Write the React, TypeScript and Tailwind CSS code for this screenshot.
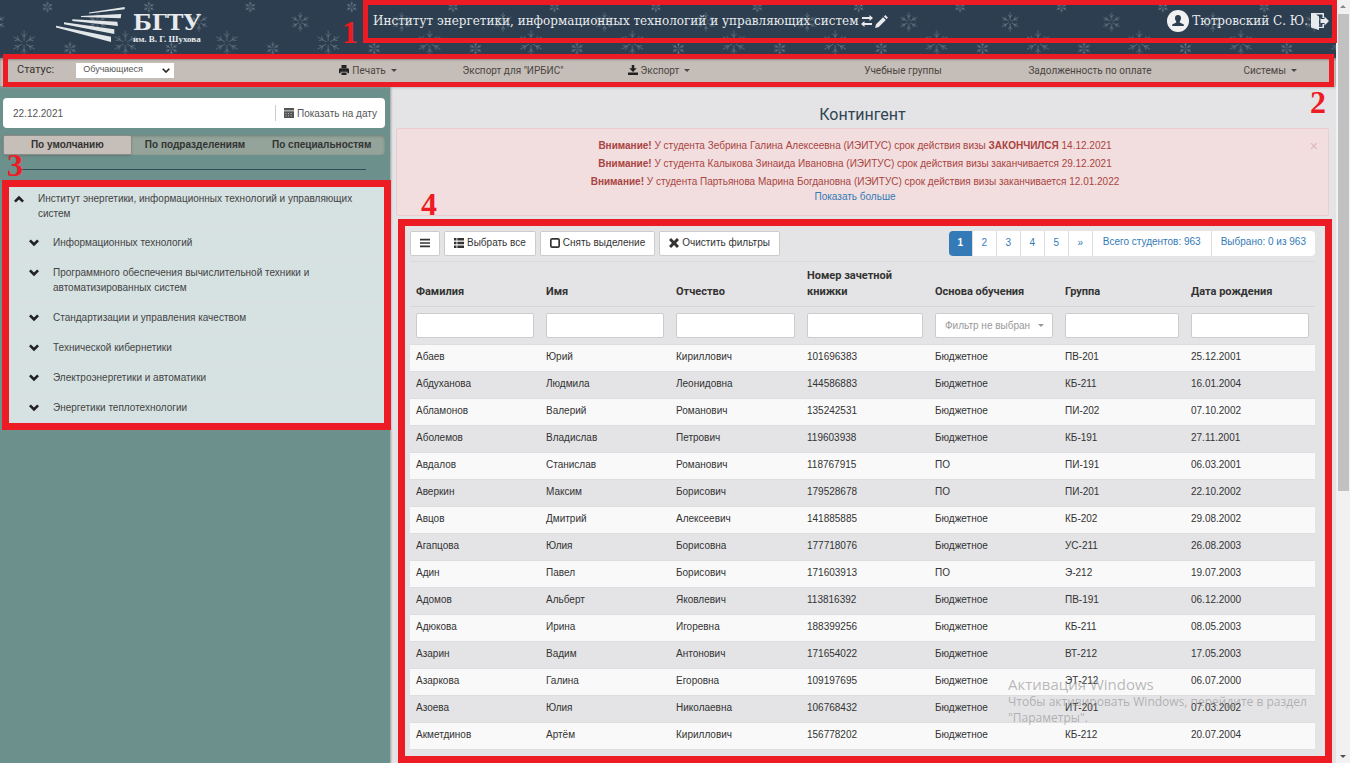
import React, { useState } from 'react';

interface Student {
  surname: string;
  name: string;
  patronymic: string;
  book: string;
  basis: string;
  group: string;
  birth: string;
}

const toStudent = (row: string): Student => {
  const [surname, name, patronymic, book, basis, group, birth] = row.split('|');
  return { surname, name, patronymic, book, basis, group, birth };
};

const students: Student[] = [
  'Абаев|Юрий|Кириллович|101696383|Бюджетное|ПВ-201|25.12.2001',
  'Абдуханова|Людмила|Леонидовна|144586883|Бюджетное|КБ-211|16.01.2004',
  'Абламонов|Валерий|Романович|135242531|Бюджетное|ПИ-202|07.10.2002',
  'Аболемов|Владислав|Петрович|119603938|Бюджетное|КБ-191|27.11.2001',
  'Авдалов|Станислав|Романович|118767915|ПО|ПИ-191|06.03.2001',
  'Аверкин|Максим|Борисович|179528678|ПО|ПИ-201|22.10.2002',
  'Авцов|Дмитрий|Алексеевич|141885885|Бюджетное|КБ-202|29.08.2002',
  'Агапцова|Юлия|Борисовна|177718076|Бюджетное|УС-211|26.08.2003',
  'Адин|Павел|Борисович|171603913|ПО|Э-212|19.07.2003',
  'Адомов|Альберт|Яковлевич|113816392|Бюджетное|ПВ-191|06.12.2000',
  'Адюкова|Ирина|Игоревна|188399256|Бюджетное|КБ-211|08.05.2003',
  'Азарин|Вадим|Антонович|171654022|Бюджетное|ВТ-212|17.05.2003',
  'Азаркова|Галина|Егоровна|109197695|Бюджетное|ЭТ-212|06.07.2000',
  'Азоева|Юлия|Николаевна|106768432|Бюджетное|ИТ-201|07.03.2002',
  'Акметдинов|Артём|Кириллович|156778202|Бюджетное|КБ-212|20.07.2004',
  'Акулов|Антон|Максимович|196878150|Бюджетное|ПВ-202|20.02.2002',
].map(toStudent);

const departments = [
  'Информационных технологий',
  'Программного обеспечения вычислительной техники и автоматизированных систем',
  'Стандартизации и управления качеством',
  'Технической кибернетики',
  'Электроэнергетики и автоматики',
  'Энергетики теплотехнологии',
];

const columns = ['Фамилия', 'Имя', 'Отчество', 'Номер зачетной книжки', 'Основа обучения', 'Группа', 'Дата рождения'];

const warnings = [
  { text: 'У студента Зебрина Галина Алексеевна (ИЭИТУС) срок действия визы', strong: 'ЗАКОНЧИЛСЯ', date: '14.12.2021' },
  { text: 'У студента Калыкова Зинаида Ивановна (ИЭИТУС) срок действия визы заканчивается', strong: '', date: '29.12.2021' },
  { text: 'У студента Партьянова Марина Богдановна (ИЭИТУС) срок действия визы заканчивается', strong: '', date: '12.01.2022' },
];

const paths = {
  print: 'M3 0h6v3.500H3zM1 4h10l1 1v5h-2V8H2v2H0V5zM3 9h6v3H3z',
  download: 'M4.500 0h3v4H10.500L6 8.500 1.500 4h3zM0 9h12v3H0z',
  transfer: 'M8.500 0L12 3 8.500 6V4H1V2h7.500zM3.500 6v2H11v2H3.500v2L0 9z',
  pencil: 'M9.500 0L12 2.500 10.700 3.800 8.200 1.300zM7.500 2L10 4.500 3.500 11 0 12l1-3.500z',
  calendar: 'M0 0h12v3H0zM0 4h12v8H0zM2 6v1h1V6zM5 6v1h1V6zM8 6v1h1V6zM2 9v1h1V9zM5 9v1h1V9zM8 9v1h1V9z',
  up: 'M6 2l6 6-2.200 2.200L6 6.500 2.200 10.200 0 8z',
  down: 'M6 10L0 4l2.200-2.200L6 5.500l3.800-3.700L12 4z',
  menu: 'M0 1h12v2H0zM0 5h12v2H0zM0 9h12v2H0z',
  list: 'M0 0h3v3H0zM4 0h8v3H4zM0 4.500h3v3H0zM4 4.500h8v3H4zM0 9h3v3H0zM4 9h8v3H4z',
  unchecked: 'M2.500 0h7A2.500 2.500 0 0 1 12 2.500v7A2.500 2.500 0 0 1 9.500 12h-7A2.500 2.500 0 0 1 0 9.500v-7A2.500 2.500 0 0 1 2.500 0zM2 2v8h8V2z',
  remove: 'M2.500 0L6 3.500 9.500 0 12 2.500 8.500 6 12 9.500 9.500 12 6 8.500 2.500 12 0 9.500 3.500 6 0 2.500z',
};

const Icon: React.FC<{ name: keyof typeof paths; className?: string }> = ({ name, className = 'size-[10px]' }) => (
  <svg viewBox="0 0 12 12" fill="currentColor" fillRule="evenodd" className={`shrink-0 ${className}`} aria-hidden="true">
    <path d={paths[name]} />
  </svg>
);

const Caret = () => (
  <svg viewBox="0 0 6 3" className="w-[6px] h-[3px] shrink-0 fill-current" aria-hidden="true">
    <path d="M0 0h6L3 3z" />
  </svg>
);

// Six arms with twigs, drawn around 0,0
const Flake: React.FC<{ x: number; y: number; r: number }> = ({ x, y, r }) => (
  <g transform={`translate(${x} ${y}) scale(${r / 12})`}>
    {[0, 60, 120, 180, 240, 300].map(angle => (
      <path key={angle} d="M0 -2V-12M0 -6L-2.500 -9M0 -6L2.500 -9" vectorEffect="non-scaling-stroke" transform={`rotate(${angle})`} />
    ))}
  </g>
);

const Snow = () => (
  <svg className="absolute inset-0 size-full" aria-hidden="true">
    <defs>
      <pattern id="snow" width="101.4" height="58" patternUnits="userSpaceOnUse">
        <g stroke="#93a3ae" strokeOpacity="0.45" strokeWidth="0.9" fill="none">
          <Flake x={24} y={43} r={12.500} />
          <Flake x={47.500} y={7} r={5.500} />
          <Flake x={70} y={48.500} r={6.500} />
          <Flake x={97.500} y={22} r={9.500} />
          <Flake x={-3.900} y={22} r={9.500} />
        </g>
      </pattern>
    </defs>
    <rect width="100%" height="100%" fill="url(#snow)" />
  </svg>
);

const Header = () => (
  <header className="relative h-[58px] shrink-0 bg-[#2d3e50] text-[#e8ebed]">
    <Snow />
    <div className="relative flex h-[42px] items-center font-['DejaVu_Serif',serif]">
      <a href="#" className="flex w-[373px] shrink-0 items-start gap-[7px] self-start pl-14 pt-[7px]">
        <svg viewBox="0 0 70 36" className="h-9 w-[70px]" fill="#e3e7ea" aria-hidden="true">
          <path d="M33 5.500L68.700 0v2.300L33 6.400zM25 9.100L65.300 7l-.6 4.300L25 10zM16.300 12.200L61.300 14.700l.7 4.300L16.300 13.900zM8 15.200L58.300 22.300V27L8 17.200zM0 18.800L55 29.700V35L0 20.500z" />
        </svg>
        <span className="flex flex-col pt-1">
          <b className="text-[22px] leading-[22px]">БГТУ</b>
          <span className="font-['Liberation_Serif',serif] text-[9px] font-bold leading-3">им. В. Г. Шухова</span>
        </span>
      </a>
      <h1 className="text-[12px] whitespace-nowrap">Институт энергетики, информационных технологий и управляющих систем</h1>
      <button aria-label="Сменить" className="ml-[2px]"><Icon name="transfer" className="size-3" /></button>
      <button aria-label="Изменить" className="ml-[2px]"><Icon name="pencil" className="size-[13px]" /></button>
      <div className="ml-auto flex items-center gap-[3px] pr-[7px]">
        <svg viewBox="0 0 22 22" className="size-[22px]" aria-hidden="true">
          <circle cx="11" cy="11" r="11" fill="#f1f1f1" />
          <path d="M11 5c2.200 0 3.200 1.600 3 3.600-.1 1.400-.7 2.200-1.200 2.800v1.200l4 1.900V16H5.200v-1.500l4-1.900v-1.200C8.700 10.800 8.100 10 8 8.600 7.800 6.600 8.800 5 11 5z" fill="#2d3e50" />
        </svg>
        <span className="text-[12px] whitespace-nowrap">Тютровский С. Ю.</span>
        <button aria-label="Выйти">
          <svg viewBox="0 0 18 18" className="size-[18px]" fill="#e8ebed" aria-hidden="true">
            <path d="M0 1h13v5h-1.500V2.500H5L8 4.500V15h3.500v-3H13v4H8v2L0 15.500z" />
            <path d="M9.500 7h4V4.500L18 9l-4.500 4.500V11h-4z" />
          </svg>
        </button>
      </div>
    </div>
  </header>
);

const NavButton: React.FC<{ icon?: keyof typeof paths; caret?: boolean; children: React.ReactNode }> = ({ icon, caret, children }) => (
  <button className="flex items-center justify-center gap-[3px] whitespace-nowrap">
    {icon && <span className="text-[#222]"><Icon name={icon} /></span>}
    {children}
    {caret && <span className="pl-[2px]"><Caret /></span>}
  </button>
);

const Nav = () => (
  <nav className="relative z-10 grid h-7 shrink-0 grid-cols-[296fr_144fr_146fr_146fr_76fr_190fr_184fr_154fr] bg-[#c5bdb7] pb-1 font-[Roboto,sans-serif] text-[10px] text-[#4a4642] shadow-[inset_0_2px_2px_#8f8a86,0_1px_3px_#999]">
    <div className="flex items-center gap-[22px] pl-[17px]">
      <label htmlFor="status" className="text-[11px] text-[#333]">Статус:</label>
      <span className="relative">
        <select id="status" className="block h-[15px] w-[98px] appearance-none bg-white pl-[7px] font-['Liberation_Sans',sans-serif] text-[9px] text-[#555]">
          <option>Обучающиеся</option>
        </select>
        <svg viewBox="0 0 8 5" className="pointer-events-none absolute right-1 top-[5px] h-[5px] w-2" fill="none" stroke="#222" strokeWidth="1.6" aria-hidden="true">
          <path d="M.7.7L4 4 7.300.7" />
        </svg>
      </span>
    </div>
    <NavButton icon="print" caret>Печать</NavButton>
    <NavButton>Экспорт для "ИРБИС"</NavButton>
    <NavButton icon="download" caret>Экспорт</NavButton>
    <span />
    <NavButton>Учебные группы</NavButton>
    <NavButton>Задолженность по оплате</NavButton>
    <div className="flex justify-end pr-[39px]"><NavButton caret>Системы</NavButton></div>
  </nav>
);

const Sidebar = () => {
  const [tab, setTab] = useState(0);
  return (
    <aside className="w-[390px] shrink-0 bg-[#6c918c] px-[3px] pt-3 pr-[5px] text-[10px] text-[#444] shadow-[1px_0_2px_#999]">
      <div className="flex h-[30px] items-center rounded bg-white text-[#555]">
        <input aria-label="Дата" defaultValue="22.12.2021" className="min-w-0 flex-1 pl-[10px] outline-none" />
        <button className="flex h-4 items-center gap-[3px] border-l border-[#ccc] px-2 text-[#555] whitespace-nowrap">
          <Icon name="calendar" /> Показать на дату
        </button>
      </div>
      <div className="mt-[7px] flex h-5 rounded bg-[#94a49b] font-bold text-[#333] shadow-[inset_0_1px_3px_#6d7d76]">
        {['По умолчанию', 'По подразделениям', 'По специальностям'].map((label, i) => (
          <button
            key={label}
            onClick={() => setTab(i)}
            className={`h-5 flex-1 pb-[2px] whitespace-nowrap ${tab === i ? 'rounded-xs border border-[#8d8984] bg-[#c6beb8] shadow-sm' : ''}`}
          >
            {label}
          </button>
        ))}
      </div>
      <hr className="ml-4 mr-[19px] mt-[14px] border-[#2f5055]" />
      <ul className="mt-4 border-b border-[#9fb0b0] bg-[#d6e1e1] leading-[15px]">
        <li className="flex gap-[14px] pt-[5px] pb-[7px] pl-[11px] pr-5">
          <button aria-label="Свернуть" className="h-[15px] text-[#222]"><Icon name="up" /></button>
          Институт энергетики, информационных технологий и управляющих систем
        </li>
        {departments.map(item => (
          <li key={item} className="flex gap-[14px] border-t border-[#d9dede] pt-[6px] pb-2 pl-[26px] pr-10">
            <button aria-label="Развернуть" className="h-[15px] text-[#222]"><Icon name="down" /></button>
            {item}
          </li>
        ))}
      </ul>
    </aside>
  );
};

const toolButton = 'flex h-[25px] items-center gap-[3px] rounded-xs border border-[#ccc] bg-white px-[9px] pb-[2px] text-[#333] whitespace-nowrap';

const Toolbar = () => (
  <div className="flex justify-between border-b border-[#dadada] pb-[5px]">
    <div className="flex gap-1">
      <button aria-label="Меню" className={toolButton}><Icon name="menu" /></button>
      <button className={toolButton}><Icon name="list" />Выбрать все</button>
      <button className={toolButton}><Icon name="unchecked" />Снять выделение</button>
      <button className={toolButton}><Icon name="remove" />Очистить фильтры</button>
    </div>
    <div className="flex h-[25px] divide-x divide-[#ddd] overflow-hidden rounded bg-white leading-[22px] text-[#337ab7]">
      <button className="w-6 bg-[#337ab7] pb-[2px] font-bold text-white">1</button>
      {['2', '3', '4', '5', '»'].map(page => (
        <button key={page} className="w-6 pb-[2px]">{page}</button>
      ))}
      <span className="px-[10px]">Всего студентов: 963</span>
      <span className="px-[9px]">Выбрано: 0 из 963</span>
    </div>
  </div>
);

const StudentsTable = () => (
  <table className="w-full table-fixed border-collapse text-left text-[#333]">
    <colgroup>
      <col className="w-[130px]" />
      <col className="w-[130px]" />
      <col className="w-[131px]" />
      <col className="w-[128px]" />
      <col className="w-[130px]" />
      <col className="w-[126px]" />
      <col className="w-[130px]" />
    </colgroup>
    <thead>
      <tr className="h-11 border-b border-[#d6d6d8] font-[Roboto,sans-serif] text-[11px] leading-4">
        {columns.map(title => (
          <th key={title} className="px-[6px] pb-[6px] align-bottom font-bold">{title}</th>
        ))}
      </tr>
      <tr className="h-[38px]">
        {columns.map(title => (
          <td key={title} className="px-[6px]">
            {title === 'Основа обучения' ? (
              <span className="relative block text-[#999]">
                <select aria-label={title} className="h-[25px] w-full appearance-none rounded-xs border border-[#ccc] bg-white pl-[9px]">
                  <option>Фильтр не выбран</option>
                </select>
                <span className="pointer-events-none absolute right-[9px] top-[11px]"><Caret /></span>
              </span>
            ) : (
              <input aria-label={title} className="block h-[25px] w-full rounded-xs border border-[#ccc] bg-white px-2" />
            )}
          </td>
        ))}
      </tr>
    </thead>
    <tbody>
      {students.map(s => (
        <tr key={s.book} className="h-[27px] border-t border-[#dedee0] odd:bg-[#f9f9f9]">
          {[s.surname, s.name, s.patronymic, s.book, s.basis, s.group, s.birth].map((value, i) => (
            <td key={i} className="px-[6px] pb-[2px]">{value}</td>
          ))}
        </tr>
      ))}
    </tbody>
  </table>
);

const Content = () => (
  <main className="min-w-0 flex-1 pl-[6px] pr-[7px] pt-[17px] text-[10px]">
    <h2 className="text-center font-[Roboto,sans-serif] text-[16px] leading-6 text-[#2f4554]">Контингент</h2>
    <div className="relative mt-[1px] h-[88px] rounded-xs border border-[#ebccd1] bg-[#f2dede] pt-2 pr-[15px] text-center text-[#a94442]">
      {warnings.map(w => (
        <p key={w.date} className="leading-[18px]">
          <b>Внимание!</b> {w.text} {w.strong && <b>{w.strong} </b>}{w.date}
        </p>
      ))}
      <a href="#" className="block leading-3 text-[#337ab7]">Показать больше</a>
      <button aria-label="Закрыть" className="absolute right-[10px] top-2 text-[14px] leading-[18px] text-[#dcb9b9]">×</button>
    </div>
    <div className="mx-[14px] mt-[15px]">
      <Toolbar />
      <StudentsTable />
    </div>
  </main>
);

const Scrollbar = () => (
  <div className="flex w-[14px] shrink-0 flex-col items-center justify-between bg-[#f1f1f1] text-[#888]" aria-hidden="true">
    <div className="flex flex-col items-center">
      <span className="flex h-[14px] rotate-180 items-center"><Caret /></span>
      <span className="block h-[477px] w-[11px] bg-[#c1c1c1]" />
    </div>
    <span className="flex h-[14px] items-center text-[#505050]"><Caret /></span>
  </div>
);

// Numbered frames that lie over the page
const Callouts = () => (
  <div className="pointer-events-none absolute inset-0 z-20 font-['Liberation_Serif',serif] text-[32px] font-bold leading-8 text-[#ed1c24]">
    <div className="absolute left-[363px] right-[13px] top-0 h-[43px] border-5 border-[#ed1c24]" />
    <span className="absolute left-[342px] top-4">1</span>
    <div className="absolute left-[3px] right-4 top-[54px] h-[33px] border-5 border-[#ed1c24]" />
    <span className="absolute right-6 top-[86px]">2</span>
    <div className="absolute left-[2px] top-[180px] h-[250px] w-[389px] border-7 border-[#ed1c24]" />
    <span className="absolute left-[7px] top-[149px]">3</span>
    <div className="absolute bottom-0 left-[398px] right-[18px] top-[219px] border-7 border-[#ed1c24]" />
    <span className="absolute left-[421px] top-[188px]">4</span>
  </div>
);

const App: React.FC = () => (
  <div className="relative flex h-screen overflow-hidden bg-[#e4e4e6] font-['Liberation_Sans',Arial,sans-serif]">
    <div className="flex min-w-0 flex-1 flex-col overflow-hidden">
      <Header />
      <Nav />
      <div className="flex min-h-0 flex-1">
        <Sidebar />
        <Content />
      </div>
    </div>
    <Scrollbar />
    <Callouts />
    <div className="pointer-events-none absolute right-[22px] bottom-[37px] z-10 w-80 font-['Open_Sans',sans-serif] text-[12px] leading-4 text-[#8c8c8c]/60">
      <p className="text-[15px] leading-5">Активация Windows</p>
      <p>Чтобы активировать Windows, перейдите в раздел "Параметры".</p>
    </div>
  </div>
);

export default App;
